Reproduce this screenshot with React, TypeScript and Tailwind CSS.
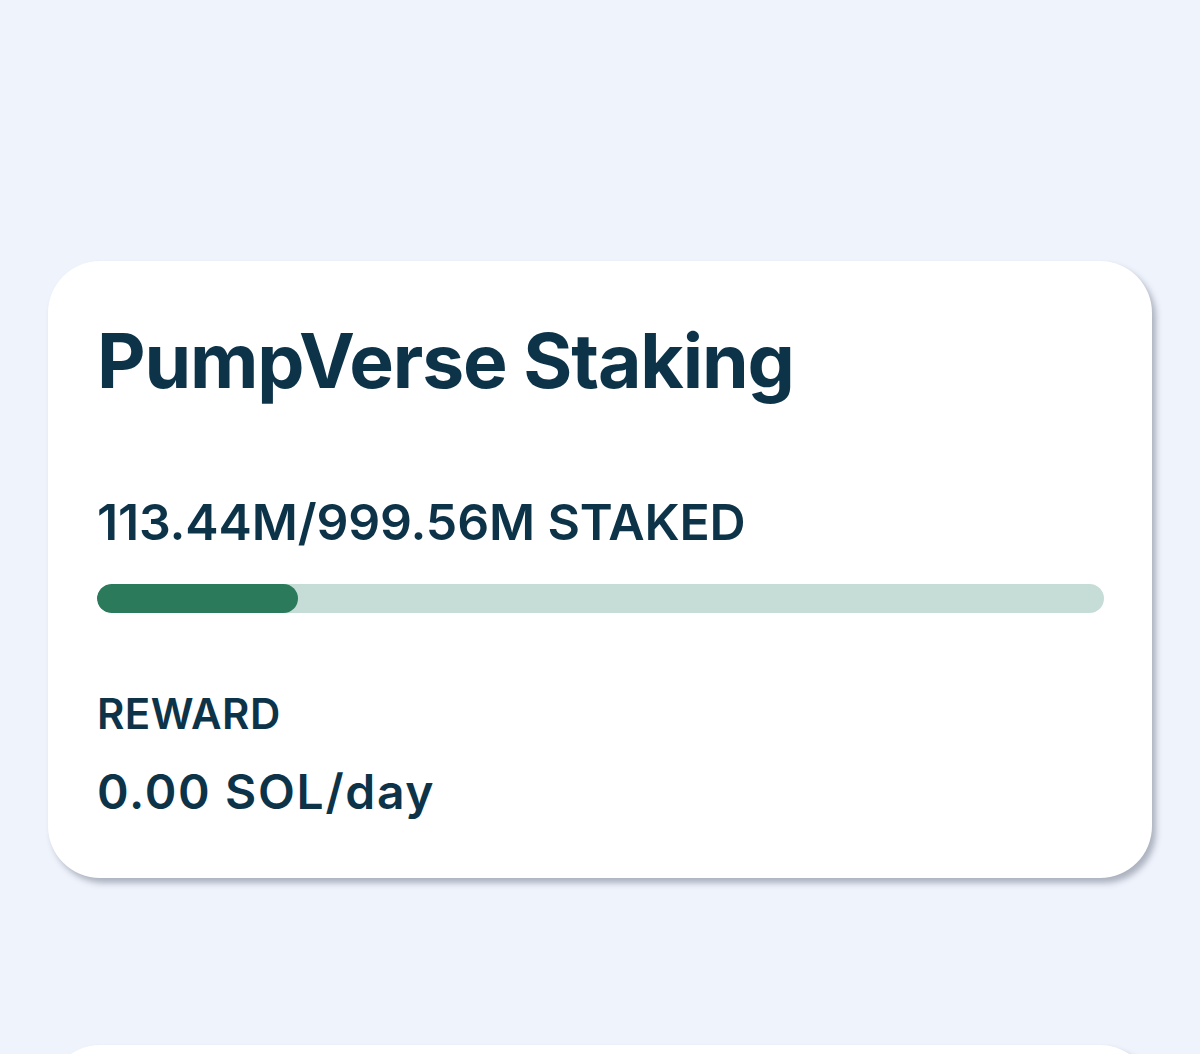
import React from "react";

const staked = 113.44;
const total = 999.56;

const StakingCard = () => {
  const pct = (staked / total) * 100;

  return (
    <div className="bg-white rounded-[52px] shadow-[4px_5px_6px_rgba(60,70,90,0.38)] pl-[49px] pr-[48px] pt-[62px] pb-[62px]">
      <h1 className="text-[75px] leading-none font-bold tracking-[-0.015em] text-[#0d3349]">
        PumpVerse Staking
      </h1>

      <div className="mt-[99px] text-[50px] leading-none font-semibold tracking-[-0.003em] text-[#0d3349]">
        113.44M/999.56M STAKED
      </div>

      <div className="mt-[37px] h-[29px] w-full rounded-full bg-[#c5ddd6] overflow-hidden">
        <div
          className="h-full rounded-full bg-[#2b7a5b]"
          style={{ width: `${Math.max(pct, 20)}%` }}
        />
      </div>

      <div className="mt-[80px] text-[42px] leading-none font-semibold tracking-[0.01em] text-[#0d3349]">
        REWARD
      </div>
      <div className="mt-[33px] text-[48px] leading-none font-semibold tracking-[0.035em] text-[#0d3349]">
        0.00 SOL/day
      </div>
    </div>
  );
};

const App = () => {
  return (
    <div
      className="h-[1054px] overflow-hidden bg-[#eff3fc] px-[48px] pt-[261px]"
      style={{ fontFamily: "Inter, 'Noto Sans', sans-serif" }}
    >
      <StakingCard />
      <div className="mt-[167px] h-[200px] bg-white rounded-[52px] shadow-[4px_5px_6px_rgba(60,70,90,0.38)]" />
    </div>
  );
};

export default App;
